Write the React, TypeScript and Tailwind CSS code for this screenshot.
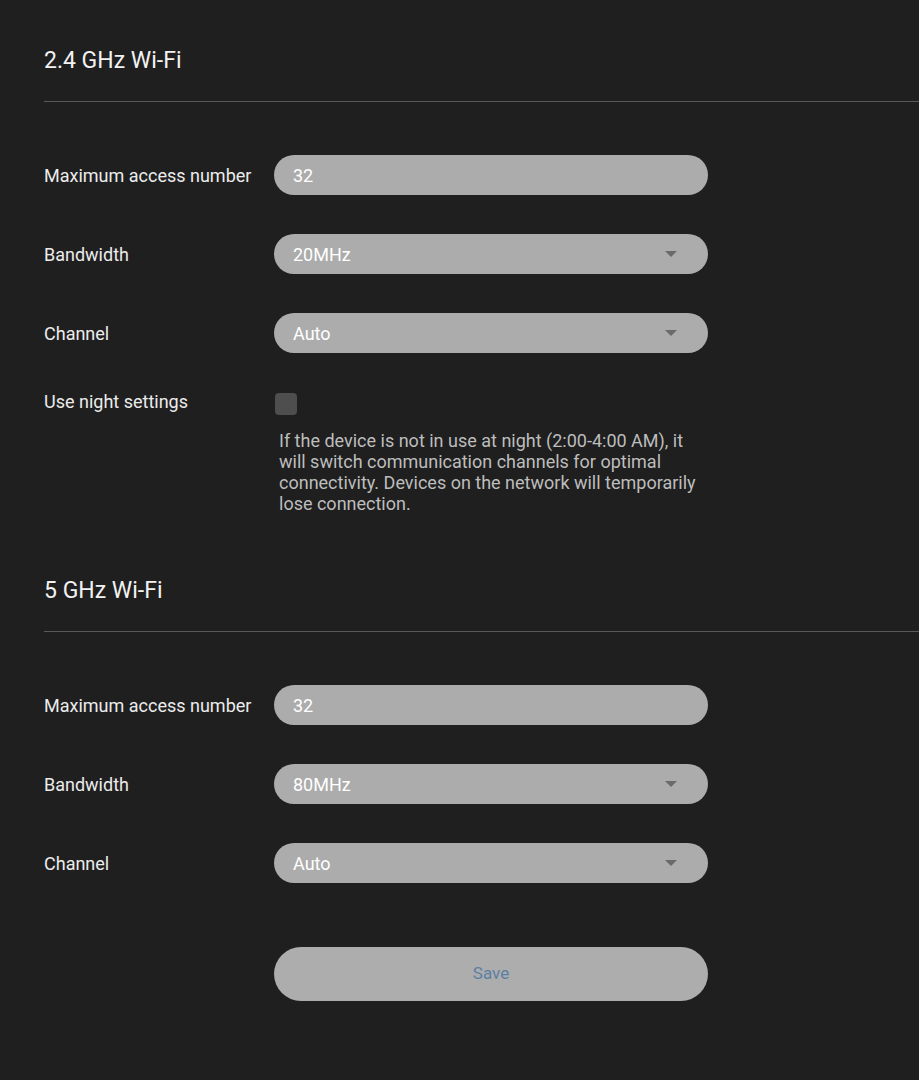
import React from "react";

const Caret = () => (
  <svg width="12" height="6" viewBox="0 0 12 6" className="shrink-0">
    <path d="M0 0 L12 0 L6 6 Z" fill="#6a6a6a" />
  </svg>
);

const Field = ({ label, value, select }: { label: string; value: string; select?: boolean }) => (
  <div className="flex items-center">
    <div className="w-[230px] text-[18px] text-[#ececec]">{label}</div>
    <div className="w-[434px] h-[40px] rounded-full bg-[#acacac] flex items-center justify-between pl-[19px] pr-[31px] text-[18px] text-white">
      <span>{value}</span>
      {select && <Caret />}
    </div>
  </div>
);

const SectionTitle = ({ title }: { title: string }) => (
  <div>
    <h2 className="text-[23px] leading-[28px] text-[#f2f2f2]">{title}</h2>
    <div className="mt-[26px] h-px bg-[#5a5a5a]" />
  </div>
);

export default function App() {
  return (
    <div
      className="min-h-[1080px] w-full bg-[#1f1f1f] pl-[44px] pt-[47px] overflow-hidden"
      style={{ fontFamily: "Roboto, 'Noto Sans', sans-serif" }}
    >
      <SectionTitle title="2.4 GHz Wi-Fi" />
      <div className="mt-[53px] flex flex-col gap-[39px]">
        <Field label="Maximum access number" value="32" />
        <Field label="Bandwidth" value="20MHz" select />
        <Field label="Channel" value="Auto" select />
      </div>

      <div className="mt-[40px] flex items-start">
        <div className="w-[230px] text-[18px] leading-[20px] text-[#ececec] -mt-[1px]">Use night settings</div>
        <div>
          <div className="ml-[1px] w-[22px] h-[22px] rounded-[4px] bg-[#4e4e4e]" />
          <p className="mt-[15px] ml-[5px] w-[425px] text-[18px] leading-[21px] text-[#bdbdbd]">
            If the device is not in use at night (2:00-4:00 AM), it will switch communication channels for optimal
            connectivity. Devices on the network will temporarily lose connection.
          </p>
        </div>
      </div>

      <div className="mt-[63px]">
        <SectionTitle title="5 GHz Wi-Fi" />
      </div>
      <div className="mt-[53px] flex flex-col gap-[39px]">
        <Field label="Maximum access number" value="32" />
        <Field label="Bandwidth" value="80MHz" select />
        <Field label="Channel" value="Auto" select />
      </div>

      <div className="mt-[64px] ml-[230px]">
        <button className="w-[434px] h-[54px] rounded-full bg-[#adadad] text-[17px] text-[#5b80a3]">Save</button>
      </div>
    </div>
  );
}
